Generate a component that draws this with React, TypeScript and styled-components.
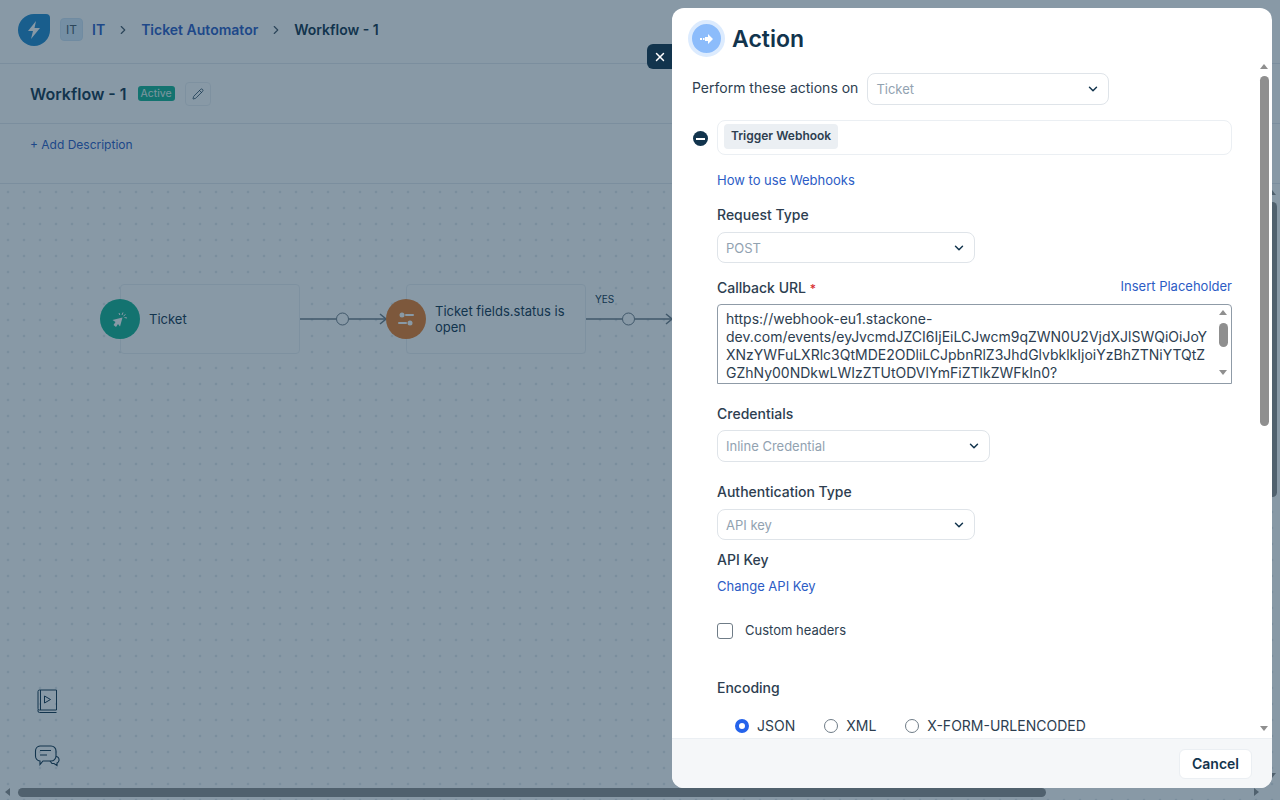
import styled, { createGlobalStyle } from "styled-components";
import { ChevronDown, ChevronRight, Pencil, X } from "lucide-react";

const GlobalStyle = createGlobalStyle`
  html, body {
    margin: 0;
    height: 100%;
    overflow: hidden;
    background: #fff;
    font-family: "Inter", "Liberation Sans", sans-serif;
    color: #12344d;
  }
  * {
    box-sizing: border-box;
  }
`;

const Page = styled.div`
  position: relative;
  width: 1280px;
  height: 800px;
  display: flex;
  flex-direction: column;
  overflow: hidden;
`;

const TopBar = styled.header`
  height: 64px;
  flex: none;
  display: flex;
  align-items: center;
  padding: 0 18px 4px;
  border-bottom: 1px solid #e4e9ee;
`;

const Logo = styled.div`
  width: 32px;
  height: 32px;
  flex: none;
  display: flex;
  align-items: center;
  justify-content: center;
  background: #2088cc;
  border-radius: 50% 4px 50% 50%;
`;

const WorkspaceBadge = styled.div`
  width: 23px;
  height: 23px;
  margin-left: 10px;
  display: flex;
  align-items: center;
  justify-content: center;
  background: #d8ebfb;
  border: 1px solid #cfe3f5;
  border-radius: 4px;
  font-size: 12px;
  color: #475867;
`;

const Crumb = styled.span<{ $current?: boolean }>`
  font-size: 14px;
  font-weight: 600;
  color: ${(p) => (p.$current ? "#12344d" : "#2c5cc5")};
`;

const CrumbFirst = styled(Crumb)`
  margin-left: 9px;
`;

const CrumbArrow = styled.span`
  display: flex;
  width: 36px;
  justify-content: center;
  color: #475867;
`;

const TitleBar = styled.div`
  height: 60px;
  flex: none;
  display: flex;
  align-items: center;
  padding-left: 30px;
  border-bottom: 1px solid #e4e9ee;
`;

const Title = styled.h1`
  margin: 0;
  font-size: 16px;
  font-weight: 600;
  color: #12344d;
`;

const Status = styled.span`
  margin-left: 11px;
  height: 15px;
  padding: 0 3px;
  display: flex;
  align-items: center;
  background: #15b392;
  border-radius: 3px;
  font-size: 10.5px;
  color: #e6f8f2;
`;

const EditButton = styled.div`
  width: 26px;
  height: 24px;
  margin-left: 10px;
  display: flex;
  align-items: center;
  justify-content: center;
  border: 1px solid #ebeff3;
  border-radius: 4px;
  color: #12344d;
`;

const DescriptionBar = styled.div`
  height: 60px;
  flex: none;
  display: flex;
  align-items: center;
  padding: 0 30px 19px;
  border-bottom: 1px solid #e4e9ee;
  font-size: 12px;
  color: #2c5cc5;
`;

const Canvas = styled.main`
  position: relative;
  flex: 1;
  min-height: 0;
  overflow: hidden;
  background-color: #fff;
  background-image: radial-gradient(circle, #e3e8ec 1.5px, transparent 1.6px);
  background-size: 16px 16px;
`;

const Node = styled.div<{ $x: number }>`
  position: absolute;
  left: ${(p) => p.$x}px;
  top: 100px;
  width: 180px;
  height: 70px;
  display: flex;
  align-items: center;
  padding: 0 10px 0 28px;
  background: #fff;
  border: 1px solid #ebeff3;
  border-radius: 4px;
  font-size: 13px;
  line-height: 16px;
  color: #12344d;
`;

const NodeIcon = styled.div<{ $color: string }>`
  position: absolute;
  left: -21px;
  top: 14px;
  width: 40px;
  height: 40px;
  display: flex;
  align-items: center;
  justify-content: center;
  border-radius: 50%;
  background: ${(p) => p.$color};
`;

const Connector = styled.svg<{ $x: number }>`
  position: absolute;
  left: ${(p) => p.$x}px;
  top: 125px;
`;

const EdgeLabel = styled.span`
  position: absolute;
  left: 595px;
  top: 109px;
  font-size: 10px;
  line-height: 12px;
  color: #12344d;
`;

const HelpIcon = styled.div<{ $top: number }>`
  position: absolute;
  left: 34px;
  top: ${(p) => p.$top}px;
  color: #12344d;
`;

// the browser bars are hidden in this window, so they get drawn
const BarThumb = styled.div<{ $left: number; $top: number; $width: number; $height: number }>`
  position: absolute;
  left: ${(p) => p.$left}px;
  top: ${(p) => p.$top}px;
  width: ${(p) => p.$width}px;
  height: ${(p) => p.$height}px;
  background: #8f8f8f;
  border-radius: 5px;
`;

const BarArrow = styled.div<{ $dir: "up" | "down" | "left" | "right"; $left: number; $top: number }>`
  position: absolute;
  left: ${(p) => p.$left}px;
  top: ${(p) => p.$top}px;
  width: 0;
  height: 0;
  border-style: solid;
  border-color: transparent;
  border-width: ${(p) => (p.$dir === "up" || p.$dir === "down" ? "5px 4.5px" : "4.5px 5px")};
  border-top-width: ${(p) => (p.$dir === "up" ? "0" : undefined)};
  border-bottom-width: ${(p) => (p.$dir === "down" ? "0" : undefined)};
  border-left-width: ${(p) => (p.$dir === "left" ? "0" : undefined)};
  border-right-width: ${(p) => (p.$dir === "right" ? "0" : undefined)};
  border-bottom-color: ${(p) => (p.$dir === "up" ? "#8f8f8f" : "transparent")};
  border-top-color: ${(p) => (p.$dir === "down" ? "#8f8f8f" : "transparent")};
  border-right-color: ${(p) => (p.$dir === "left" ? "#8f8f8f" : "transparent")};
  border-left-color: ${(p) => (p.$dir === "right" ? "#8f8f8f" : "transparent")};
`;

const Backdrop = styled.div`
  position: absolute;
  inset: 0;
  background: rgba(18, 52, 77, 0.5);
`;

const Drawer = styled.aside`
  position: absolute;
  left: 672px;
  top: 8px;
  width: 600px;
  height: 780px;
  display: flex;
  flex-direction: column;
  background: #fff;
  border-radius: 12px;
`;

const CloseTab = styled.div`
  position: absolute;
  left: -25px;
  top: 36px;
  width: 25px;
  height: 25px;
  display: flex;
  align-items: center;
  justify-content: center;
  background: #12344d;
  border-radius: 6px 0 0 6px;
  color: #fff;
`;

const DrawerHeader = styled.div`
  height: 52px;
  flex: none;
  display: flex;
  align-items: flex-start;
  gap: 7px;
  padding: 12px 16px 0;
`;

const HeaderIcon = styled.div`
  width: 37px;
  height: 37px;
  display: flex;
  align-items: center;
  justify-content: center;
  background: #8cbcfb;
  border: 4px solid #dcebfe;
  border-radius: 50%;
`;

const DrawerTitle = styled.h2`
  margin: 0;
  font-size: 23px;
  line-height: 39px;
  font-weight: 600;
  color: #12344d;
`;

const DrawerBody = styled.div`
  flex: 1;
  min-height: 0;
  overflow: hidden;
  padding: 13px 40px 0 20px;
`;

const PerformRow = styled.div`
  display: flex;
  align-items: center;
  gap: 9px;
  font-size: 14px;
  color: #2d3e50;
`;

const PerformText = styled.span`
  margin-bottom: 4px;
`;

const ActionRow = styled.div`
  margin-top: 15px;
  display: flex;
  align-items: center;
  gap: 9px;
`;

const RemoveButton = styled.div`
  position: relative;
  width: 15px;
  height: 15px;
  margin: 2px 0 0 1px;
  flex: none;
  background: #12344d;
  border-radius: 50%;

  &::after {
    content: "";
    position: absolute;
    left: 3px;
    right: 3px;
    top: 6.5px;
    height: 2px;
    background: #fff;
  }
`;

const ActionBox = styled.div`
  flex: 1;
  height: 35px;
  display: flex;
  align-items: flex-start;
  padding: 3px 6px;
  border: 1px solid #ebeff3;
  border-radius: 8px;
`;

const Chip = styled.span`
  display: flex;
  align-items: center;
  height: 25px;
  padding: 0 7px 2px;
  background: #ebeff3;
  border-radius: 4px;
  font-size: 12px;
  font-weight: 600;
  color: #2d3e50;
`;

const Form = styled.div`
  padding-left: 25px;
`;

const Label = styled.div<{ $top: number }>`
  margin-top: ${(p) => p.$top}px;
  font-size: 14px;
  line-height: 20px;
  font-weight: 500;
  color: #2d3e50;
`;

const TextLink = styled.a<{ $top?: number }>`
  display: block;
  margin-top: ${(p) => p.$top ?? 0}px;
  font-size: 13px;
  line-height: 20px;
  color: #2c5cc5;
`;

const Required = styled.span`
  font-size: 12px;
  color: #d72d30;
`;

const LabelRow = styled.div`
  display: flex;
  justify-content: space-between;
  align-items: flex-start;
`;

const Select = styled.div<{ $width: number; $height: number; $top?: number }>`
  width: ${(p) => p.$width}px;
  height: ${(p) => p.$height}px;
  margin-top: ${(p) => p.$top ?? 0}px;
  flex: none;
  display: flex;
  align-items: center;
  justify-content: space-between;
  padding: 0 8px;
  border: 1px solid #dfe4e9;
  border-radius: 8px;
  font-size: 13px;
  color: #92a2b1;

  svg {
    color: #12344d;
  }
`;

const UrlField = styled.div`
  position: relative;
  width: 515px;
  height: 80px;
  margin-top: 5px;
`;

const UrlInput = styled.textarea`
  display: block;
  width: 100%;
  height: 100%;
  padding: 5px 23px 5px 8px;
  border: 1px solid #8f9ba7;
  border-radius: 4px 4px 0 0;
  outline: none;
  overflow: hidden;
  resize: none;
  font-family: "Inter", "Liberation Sans", sans-serif;
  font-size: 14px;
  line-height: 18px;
  color: #2d3e50;
`;

const CheckRow = styled.label`
  margin-top: 25px;
  display: flex;
  align-items: center;
  gap: 12px;
  height: 20px;
  font-size: 13px;
  color: #2d3e50;
`;

const CheckBox = styled.span`
  width: 16px;
  height: 16px;
  background: #fff;
  border: 1px solid #6f7c87;
  border-radius: 3px;
`;

const CheckText = styled.span`
  margin-bottom: 2px;
`;

const RadioRow = styled.div`
  margin-top: 18px;
  display: flex;
  align-items: center;
  gap: 29px;
  height: 20px;
  padding-left: 18px;
`;

const RadioOption = styled.label`
  display: flex;
  align-items: center;
  gap: 8px;
  font-size: 14px;
  color: #2d3e50;
`;

const RadioText = styled.span`
  margin-bottom: 2px;
`;

const RadioDot = styled.span<{ $checked?: boolean }>`
  width: 14px;
  height: 14px;
  background: #fff;
  border: ${(p) => (p.$checked ? "4px solid #2563eb" : "1px solid #6f7c87")};
  border-radius: 50%;
`;

const DrawerFooter = styled.div`
  height: 50px;
  flex: none;
  display: flex;
  align-items: center;
  justify-content: flex-end;
  padding: 0 20px;
  background: #f5f7f9;
  border-top: 1px solid #ebeff3;
  border-radius: 0 0 12px 12px;
`;

const CancelButton = styled.button`
  width: 73px;
  height: 30px;
  background: #fff;
  border: 1px solid #ebeff3;
  border-radius: 6px;
  font-family: inherit;
  font-size: 14px;
  font-weight: 600;
  color: #12344d;
`;

const CALLBACK_URL =
  "https://webhook-eu1.stackone-dev.com/events/eyJvcmdJZCI6IjEiLCJwcm9qZWN0U2VjdXJlSWQiOiJoYXNzYWFuLXRlc3QtMDE2ODliLCJpbnRlZ3JhdGlvbklkIjoiYzBhZTNiYTQtZGZhNy00NDkwLWIzZTUtODVlYmFiZTlkZWFkIn0?";

function Edge() {
  return (
    <>
      <path d="M0 10H36M49 10H86" fill="none" stroke="#6f7c87" strokeWidth="1.5" />
      <path d="M80 5l6 5-6 5" fill="none" stroke="#6f7c87" strokeWidth="1.5" />
      <circle cx="42.5" cy="10" r="6" fill="#fff" stroke="#6f7c87" strokeWidth="1" />
    </>
  );
}

function FieldSelect(props: { value: string; width: number; height: number; top?: number }) {
  return (
    <Select $width={props.width} $height={props.height} $top={props.top}>
      {props.value}
      <ChevronDown size={14} strokeWidth={2.5} />
    </Select>
  );
}

export default function App() {
  return (
    <Page>
      <GlobalStyle />
      <TopBar>
        <Logo>
          <svg width="18" height="20" viewBox="0 0 18 20" fill="#fff">
            <path d="M11 1L3 11h5l-2 8 9-11H9.500z" />
          </svg>
        </Logo>
        <WorkspaceBadge>IT</WorkspaceBadge>
        <CrumbFirst>IT</CrumbFirst>
        <CrumbArrow>
          <ChevronRight size={14} strokeWidth={2} />
        </CrumbArrow>
        <Crumb>Ticket Automator</Crumb>
        <CrumbArrow>
          <ChevronRight size={14} strokeWidth={2} />
        </CrumbArrow>
        <Crumb $current>Workflow - 1</Crumb>
      </TopBar>
      <TitleBar>
        <Title>Workflow - 1</Title>
        <Status>Active</Status>
        <EditButton>
          <Pencil size={12} strokeWidth={1.5} />
        </EditButton>
      </TitleBar>
      <DescriptionBar>+ Add Description</DescriptionBar>
      <Canvas>
        <Node $x={120}>
          <NodeIcon $color="#15b392">
            <svg width="20" height="20" viewBox="0 0 20 20">
              <path d="M12.500 8.500L2.500 11l3 2-2 3 2.500 2 2-3 2 2.500z" fill="#fff" />
              <path d="M9 4l.8 2M13 3.500l-1 2.500M17 9l-2.500-.5M15.500 5.500l-2 1.500" stroke="#fff" strokeWidth="1" fill="none" />
            </svg>
          </NodeIcon>
          Ticket
        </Node>
        <Connector $x={300} width="87" height="20">
          <Edge />
        </Connector>
        <Node $x={406}>
          <NodeIcon $color="#e87d2a">
            <svg width="20" height="20" viewBox="0 0 20 20" fill="#fff">
              <circle cx="6" cy="6" r="2.500" />
              <rect x="9" y="5" width="9" height="2" rx="1" />
              <circle cx="14" cy="14" r="2.500" />
              <rect x="2" y="13" width="9" height="2" rx="1" />
            </svg>
          </NodeIcon>
          Ticket fields.status is open
        </Node>
        <EdgeLabel>YES</EdgeLabel>
        <Connector $x={586} width="87" height="20">
          <Edge />
        </Connector>
        <BarArrow $dir="up" $left={1268} $top={6} />
        <BarThumb $left={1268} $top={18} $width={9} $height={295} />
        <BarArrow $dir="down" $left={1268} $top={589} />
        <BarArrow $dir="left" $left={5} $top={604} />
        <BarThumb $left={18} $top={604} $width={1028} $height={9} />
        <BarArrow $dir="right" $left={1254} $top={604} />
      </Canvas>
      <HelpIcon $top={688}>
        <svg width="26" height="26" viewBox="0 0 26 26" fill="none" stroke="currentColor" strokeWidth="1">
          <path d="M5.500 2H22.500V22H5.500A1.500 1.500 0 0 1 4 20.500V3.500A1.500 1.500 0 0 1 5.500 2" />
          <path d="M6.500 2V22" />
          <path d="M4 21.500V23A1.500 1.500 0 0 0 5.500 24.500H22.500" />
          <path d="M10.500 8v7l6-3.500z" />
        </svg>
      </HelpIcon>
      <HelpIcon $top={743}>
        <svg width="26" height="26" viewBox="0 0 26 26" fill="none" stroke="currentColor" strokeWidth="1.1">
          <path d="M6 3h11a5 5 0 0 1 5 5v5a5 5 0 0 1-5 5H9l-3 3.500V18a5 5 0 0 1-4.500-5V8A5 5 0 0 1 6 3z" />
          <path d="M6 7.500h11M6 12h7" />
          <path d="M22 13.500a3 3 0 0 1 3 3v1a3 3 0 0 1-2 2.500v2.500L20 20.500h-2l-2-2.500" />
        </svg>
      </HelpIcon>
      <Backdrop />
      <Drawer>
        <CloseTab>
          <X size={14} strokeWidth={2.5} />
        </CloseTab>
        <DrawerHeader>
          <HeaderIcon>
            <svg width="16" height="12" viewBox="0 0 16 12" fill="#fff">
              <path d="M9 1l5 5-5 5V8H6V4h3z" />
              <rect x="1" y="5" width="2" height="2" />
              <rect x="4" y="5" width="1.500" height="2" />
            </svg>
          </HeaderIcon>
          <DrawerTitle>Action</DrawerTitle>
        </DrawerHeader>
        <DrawerBody>
          <PerformRow>
            <PerformText>Perform these actions on</PerformText>
            <FieldSelect value="Ticket" width={242} height={32} />
          </PerformRow>
          <ActionRow>
            <RemoveButton />
            <ActionBox>
              <Chip>Trigger Webhook</Chip>
            </ActionBox>
          </ActionRow>
          <Form>
            <TextLink $top={15}>How to use Webhooks</TextLink>
            <Label $top={15}>Request Type</Label>
            <FieldSelect value="POST" width={258} height={31} top={7} />
            <LabelRow>
              <Label $top={15}>
                Callback URL <Required>*</Required>
              </Label>
              <TextLink $top={13}>Insert Placeholder</TextLink>
            </LabelRow>
            <UrlField>
              <UrlInput defaultValue={CALLBACK_URL} spellCheck={false} />
              <BarArrow $dir="up" $left={502} $top={6} />
              <BarThumb $left={502} $top={19} $width={9} $height={24} />
              <BarArrow $dir="down" $left={502} $top={66} />
            </UrlField>
            <Label $top={20}>Credentials</Label>
            <FieldSelect value="Inline Credential" width={273} height={32} top={6} />
            <Label $top={20}>Authentication Type</Label>
            <FieldSelect value="API key" width={258} height={31} top={7} />
            <Label $top={10}>API Key</Label>
            <TextLink $top={6}>Change API Key</TextLink>
            <CheckRow>
              <CheckBox />
              <CheckText>Custom headers</CheckText>
            </CheckRow>
            <Label $top={37}>Encoding</Label>
            <RadioRow>
              <RadioOption>
                <RadioDot $checked />
                <RadioText>JSON</RadioText>
              </RadioOption>
              <RadioOption>
                <RadioDot />
                <RadioText>XML</RadioText>
              </RadioOption>
              <RadioOption>
                <RadioDot />
                <RadioText>X-FORM-URLENCODED</RadioText>
              </RadioOption>
            </RadioRow>
          </Form>
        </DrawerBody>
        <BarArrow $dir="up" $left={588} $top={56} />
        <BarThumb $left={588} $top={68} $width={9} $height={350} />
        <BarArrow $dir="down" $left={588} $top={718} />
        <DrawerFooter>
          <CancelButton>Cancel</CancelButton>
        </DrawerFooter>
      </Drawer>
    </Page>
  );
}
